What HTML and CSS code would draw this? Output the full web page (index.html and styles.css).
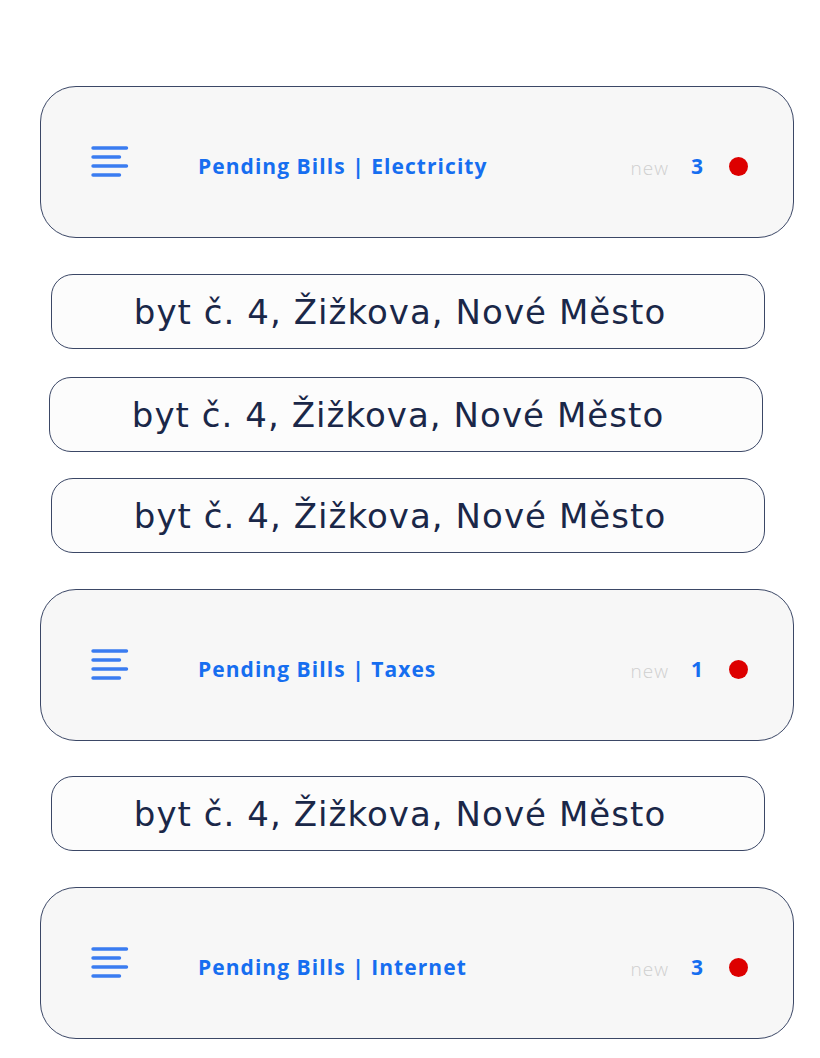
FILE: index.html
```html
<!DOCTYPE html>
<html lang="cs">
<head>
<meta charset="utf-8">
<title>Pending Bills</title>
<link rel="stylesheet" href="styles.css">
</head>
<body>
<main class="list">
  <section class="card">
    <svg class="card__icon" width="40" height="34" viewBox="0 0 40 34" aria-hidden="true">
      <g stroke="#3a7cf1" stroke-width="3.4" stroke-linecap="round" fill="none">
        <line x1="2" y1="3" x2="35.5" y2="3"/>
        <line x1="2" y1="12" x2="28.5" y2="12"/>
        <line x1="2" y1="21" x2="35.5" y2="21"/>
        <line x1="2" y1="30" x2="28.5" y2="30"/>
      </g>
    </svg>
    <h2 class="card__title">Pending Bills | Electricity</h2>
    <span class="card__new">new</span>
    <span class="card__count">3</span>
    <span class="card__dot"></span>
  </section>

  <div class="pill pill--first">byt č. 4, Žižkova, Nové Město</div>
  <div class="pill pill--shift">byt č. 4, Žižkova, Nové Město</div>
  <div class="pill pill--tight">byt č. 4, Žižkova, Nové Město</div>

  <section class="card card--after">
    <svg class="card__icon" width="40" height="34" viewBox="0 0 40 34" aria-hidden="true">
      <g stroke="#3a7cf1" stroke-width="3.4" stroke-linecap="round" fill="none">
        <line x1="2" y1="3" x2="35.5" y2="3"/>
        <line x1="2" y1="12" x2="28.5" y2="12"/>
        <line x1="2" y1="21" x2="35.5" y2="21"/>
        <line x1="2" y1="30" x2="28.5" y2="30"/>
      </g>
    </svg>
    <h2 class="card__title">Pending Bills | Taxes</h2>
    <span class="card__new">new</span>
    <span class="card__count">1</span>
    <span class="card__dot"></span>
  </section>

  <div class="pill pill--after-card">byt č. 4, Žižkova, Nové Město</div>

  <section class="card card--after-one">
    <svg class="card__icon" width="40" height="34" viewBox="0 0 40 34" aria-hidden="true">
      <g stroke="#3a7cf1" stroke-width="3.4" stroke-linecap="round" fill="none">
        <line x1="2" y1="3" x2="35.5" y2="3"/>
        <line x1="2" y1="12" x2="28.5" y2="12"/>
        <line x1="2" y1="21" x2="35.5" y2="21"/>
        <line x1="2" y1="30" x2="28.5" y2="30"/>
      </g>
    </svg>
    <h2 class="card__title">Pending Bills | Internet</h2>
    <span class="card__new">new</span>
    <span class="card__count">3</span>
    <span class="card__dot"></span>
  </section>
</main>
</body>
</html>
```

FILE: styles.css
```css
* { box-sizing: border-box; }

html, body {
  margin: 0;
  padding: 0;
  background: #ffffff;
}

body {
  font-family: "Open Sans", "Liberation Sans", sans-serif;
}

.list {
  display: flex;
  flex-direction: column;
  padding: 86px 26px 0 40px;
}

.card {
  display: flex;
  align-items: center;
  height: 152px;
  padding: 8px 45px 0 50px;
  background: #f7f7f7;
  border: 1px solid #3b4766;
  border-radius: 36px;
}

.card--after { margin-top: 36px; }
.card--after-one { margin-top: 36px; }

.card__icon {
  flex: none;
  margin-top: -8px;
}

.card__title {
  margin: 0 0 0 67px;
  flex: 1;
  font-size: 21px;
  font-weight: 700;
  color: #166ef0;
  letter-spacing: 1.05px;
}

.card__new {
  font-size: 19px;
  font-weight: 300;
  color: #cfcfcf;
  letter-spacing: 1px;
  margin-top: 4px;
}

.card__count {
  margin-left: 22px;
  font-size: 21px;
  font-weight: 700;
  color: #166ef0;
}

.card__dot {
  width: 19px;
  height: 19px;
  margin-left: 26px;
  border-radius: 50%;
  background: #dd0000;
}

.pill {
  display: flex;
  align-items: center;
  justify-content: center;
  height: 75px;
  margin: 28px 29px 0 11px;
  padding-right: 16px;
  background: #fcfcfc;
  border: 1px solid #3b4766;
  border-radius: 22px;
  font-family: "DejaVu Sans", "Open Sans", sans-serif;
  font-size: 34px;
  font-weight: 400;
  letter-spacing: 1.05px;
  color: #1a2748;
}

.pill--first { margin-top: 36px; }
.pill--after-card { margin-top: 35px; }
.pill--shift { margin-left: 9px; margin-right: 31px; }
.pill--tight { margin-top: 26px; }
```
